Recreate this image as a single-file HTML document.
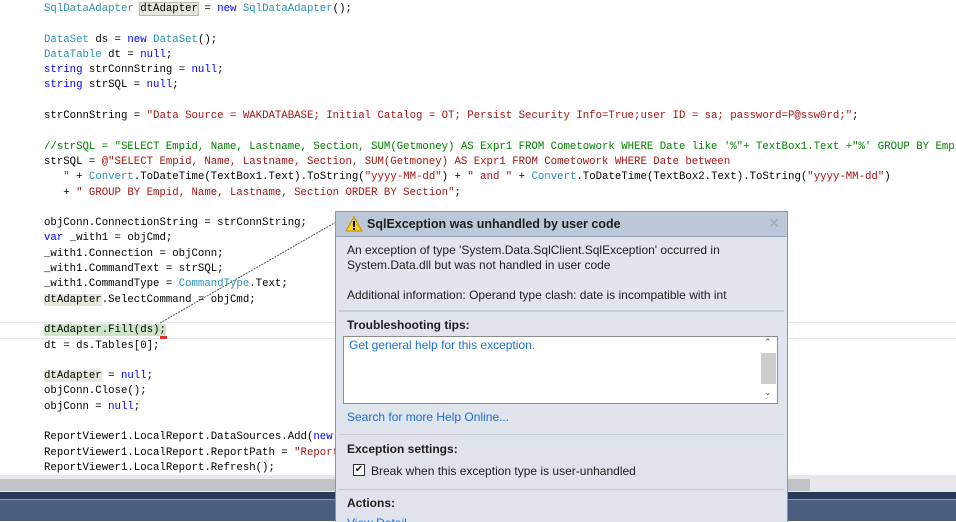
<!DOCTYPE html>
<html><head><style>
html,body{margin:0;width:956px;height:522px;overflow:hidden}
body{background:#fff;position:relative;font-family:"Liberation Mono",monospace}
.code{position:absolute;left:44px;top:2px;font-size:10.7px;line-height:15.3px;color:#000}
.l{height:15.3px;white-space:pre}
.t{color:#2b91af}.k{color:#0000ff}.s{color:#a31515}.c{color:#008000}
.hl{background:#e3e8db}
.dlg{position:absolute;left:335px;top:211px;width:451px;height:330px;border:1px solid #8a96aa;background:linear-gradient(#e0e5ee,#dfe4ec);font-family:"Liberation Sans",sans-serif;font-size:12px;color:#1e1e1e}
.a{position:absolute;white-space:nowrap}
.sep{position:absolute;left:3px;right:3px;height:1px;background:#aab4c4}
.b{font-weight:bold}
.lk{color:#1a6fd6}
</style></head><body>
<div style="position:absolute;left:0;right:0;top:322px;height:15px;border-top:1px solid #e6e6ee;border-bottom:1px solid #e6e6ee"></div>
<div class="code"><div class="l"><span class="t">SqlDataAdapter</span> <span style="background:#e3e8db;outline:1px solid #b8bca8">dtAdapter</span> = <span class="k">new</span> <span class="t">SqlDataAdapter</span>();</div><div class="l"> </div><div class="l"><span class="t">DataSet</span> ds = <span class="k">new</span> <span class="t">DataSet</span>();</div><div class="l"><span class="t">DataTable</span> dt = <span class="k">null</span>;</div><div class="l"><span class="k">string</span> strConnString = <span class="k">null</span>;</div><div class="l"><span class="k">string</span> strSQL = <span class="k">null</span>;</div><div class="l"> </div><div class="l">strConnString = <span class="s">"Data Source = WAKDATABASE; Initial Catalog = OT; Persist Security Info=True;user ID = sa; password=P@ssw0rd;"</span>;</div><div class="l"> </div><div class="l"><span class="c">//strSQL = "SELECT Empid, Name, Lastname, Section, SUM(Getmoney) AS Expr1 FROM Cometowork WHERE Date like '%"+ TextBox1.Text +"%' GROUP BY Empid</span></div><div class="l">strSQL = <span class="s">@"SELECT Empid, Name, Lastname, Section, SUM(Getmoney) AS Expr1 FROM Cometowork WHERE Date between</span></div><div class="l"><span class="s">   "</span> + <span class="t">Convert</span>.ToDateTime(TextBox1.Text).ToString(<span class="s">"yyyy-MM-dd"</span>) + <span class="s">" and "</span> + <span class="t">Convert</span>.ToDateTime(TextBox2.Text).ToString(<span class="s">"yyyy-MM-dd"</span>)</div><div class="l">   + <span class="s">" GROUP BY Empid, Name, Lastname, Section ORDER BY Section"</span>;</div><div class="l"> </div><div class="l">objConn.ConnectionString = strConnString;</div><div class="l"><span class="k">var</span> _with1 = objCmd;</div><div class="l">_with1.Connection = objConn;</div><div class="l">_with1.CommandText = strSQL;</div><div class="l">_with1.CommandType = <span class="t">CommandType</span>.Text;</div><div class="l"><span class="hl">dtAdapter</span>.SelectCommand = objCmd;</div><div class="l"> </div><div class="l"><span style="background:#cde6c7">dtAdapter.Fill(ds);</span></div><div class="l">dt = ds.Tables[0];</div><div class="l"> </div><div class="l"><span class="hl">dtAdapter</span> = <span class="k">null</span>;</div><div class="l">objConn.Close();</div><div class="l">objConn = <span class="k">null</span>;</div><div class="l"> </div><div class="l">ReportViewer1.LocalReport.DataSources.Add(<span class="k">new</span> ReportDataSource(</div><div class="l">ReportViewer1.LocalReport.ReportPath = <span class="s">"Report1.rdlc"</span>;</div><div class="l">ReportViewer1.LocalReport.Refresh();</div></div>
<div style="position:absolute;left:160px;top:336px;width:7px;height:3px;background:#e03030"></div>
<svg style="position:absolute;left:0;top:0" width="956" height="522"><line x1="160" y1="323" x2="336" y2="222" stroke="#555" stroke-width="1" stroke-dasharray="2,1"/></svg>
<div style="position:absolute;left:0;right:0;top:475px;height:17px;background:#e8e8ec"></div>
<div style="position:absolute;left:0;width:335px;top:479px;height:12px;background:#c2c3c9"></div>
<div style="position:absolute;left:786px;width:24px;top:479px;height:12px;background:#c2c3c9"></div>
<div style="position:absolute;left:0;right:0;top:492px;height:7px;background:#293a58;border-bottom:1px solid #8a9ab8"></div>
<div style="position:absolute;left:0;right:0;top:500px;height:21px;background:#4a5f80"></div>
<div class="dlg">
<div style="position:absolute;left:0;right:0;top:0;height:24px;background:#bcc7d8;border-bottom:1px solid #9aa6b8"></div>
<svg class="a" style="left:9px;top:4px" width="18" height="16"><polygon points="9,1 17,15 1,15" fill="#f8d020" stroke="#c09000"/><rect x="8" y="5" width="2" height="6" fill="#000"/><rect x="8" y="12" width="2" height="2" fill="#000"/></svg>
<div class="a b" style="left:31px;top:5px;font-size:12.5px">SqlException was unhandled by user code</div>
<div class="a" style="right:7px;top:3px;color:#a0a8b4;font-size:14px">✕</div>
<div class="a" style="left:11px;top:31px;line-height:15px">An exception of type 'System.Data.SqlClient.SqlException' occurred in<br>System.Data.dll but was not handled in user code</div>
<div class="a" style="left:11px;top:76px">Additional information: Operand type clash: date is incompatible with int</div>
<div class="sep" style="top:98px;background:#c5ccd8;height:2px"></div>
<div class="a b" style="left:11px;top:106px">Troubleshooting tips:</div>
<div class="a" style="left:7px;top:124px;width:433px;height:66px;background:#fff;border:1px solid #8c8c8c"></div>
<div class="a lk" style="left:13px;top:126px">Get general help for this exception.</div>
<div class="a" style="left:425px;top:141px;width:15px;height:31px;background:#cdcdcd"></div>
<div class="a" style="left:428px;top:125px;font-size:9px;color:#555">⌃</div>
<div class="a" style="left:428px;top:175px;font-size:9px;color:#555">⌄</div>
<div class="a lk" style="left:11px;top:198px">Search for more Help Online...</div>
<div class="sep" style="top:222px;background:#c5ccd8"></div>
<div class="a b" style="left:11px;top:230px">Exception settings:</div>
<div class="a" style="left:17px;top:252px;width:10px;height:10px;border:1px solid #333;background:#fff;font-size:10px;line-height:10px;text-align:center">✔</div>
<div class="a" style="left:35px;top:252px">Break when this exception type is user-unhandled</div>
<div class="sep" style="top:277px;background:#c5ccd8"></div>
<div class="a b" style="left:11px;top:284px">Actions:</div>
<div class="a lk" style="left:11px;top:304px">View Detail...</div>
</div>
</body></html>
